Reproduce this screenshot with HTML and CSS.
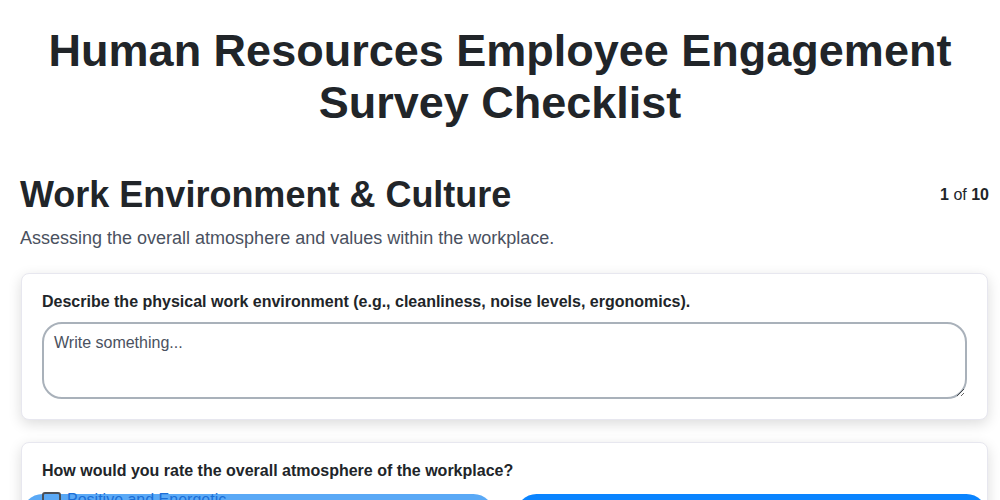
FILE: index.html
```html
<!DOCTYPE html>
<html lang="en">
<head>
<meta charset="utf-8">
<title>Human Resources Employee Engagement Survey Checklist</title>
<link rel="stylesheet" href="styles.css">
</head>
<body>
<main class="page">
  <h1 class="title">Human Resources Employee Engagement Survey Checklist</h1>

  <section class="section">
    <div class="section-head">
      <h2 class="section-title">Work Environment &amp; Culture</h2>
      <div class="counter"><b>1</b> of <b>10</b></div>
    </div>
    <p class="section-desc">Assessing the overall atmosphere and values within the workplace.</p>

    <div class="card">
      <label class="question" for="q1">Describe the physical work environment (e.g., cleanliness, noise levels, ergonomics).</label>
      <textarea id="q1" class="answer" placeholder="Write something..."></textarea>
    </div>

    <div class="card">
      <p class="question">How would you rate the overall atmosphere of the workplace?</p>
      <div class="options">
        <label class="option option-light"><span class="option-row"><input type="checkbox" class="check"><span class="option-text">Positive and Energetic</span></span></label>
        <label class="option option-strong"><span class="option-row"><input type="checkbox" class="check" checked><span class="option-text">Calm and Focused</span></span></label>
        <label class="option option-light"><span class="option-row"><input type="checkbox" class="check"><span class="option-text">Tense or Stressful</span></span></label>
        <label class="option option-light"><span class="option-row"><input type="checkbox" class="check"><span class="option-text">Neutral</span></span></label>
      </div>
    </div>
  </section>
</main>
</body>
</html>
```
FILE: styles.css
```css
html, body {
  margin: 0;
  padding: 0;
  background: #ffffff;
}

body {
  font-family: "Liberation Sans", Arial, sans-serif;
  color: #212529;
}

.page {
  padding: 25px 0 40px;
}

.title {
  margin: 0;
  font-size: 45px;
  line-height: 52px;
  font-weight: 700;
  text-align: center;
  color: #212529;
}

.section {
  margin-top: 45px;
  padding: 0 11px 0 20px;
}

.section-head {
  display: flex;
  align-items: center;
  justify-content: space-between;
}

.section-title {
  margin: 0;
  font-size: 36px;
  font-weight: 700;
  line-height: normal;
  color: #212529;
}

.counter {
  font-size: 16px;
  color: #212529;
}

.section-desc {
  margin: 12px 0 24px;
  font-size: 18px;
  color: #4a5160;
}

.card {
  margin: 0 1px 22px;
  padding: 19px 20px 20px;
  background: #ffffff;
  border: 1px solid #e7e7ef;
  border-radius: 8px;
  box-shadow: 0 4px 14px rgba(0, 0, 0, 0.14);
}

.question {
  display: block;
  margin: 0 0 11px;
  font-size: 16px;
  font-weight: 700;
  line-height: normal;
  color: #212529;
}

.answer {
  display: block;
  box-sizing: border-box;
  width: 100%;
  height: 77px;
  margin: 0;
  padding: 10px;
  border: 2px solid #a9b1ba;
  border-radius: 20px;
  font-family: "Liberation Sans", Arial, sans-serif;
  font-size: 16px;
  color: #212529;
  background: #ffffff;
}

.answer::placeholder {
  color: #4a5160;
}

.options {
  display: grid;
  grid-template-columns: 1fr 1fr;
  column-gap: 22px;
  row-gap: 12px;
  margin: 0 -20px 0 -20px;
}

.option {
  position: relative;
  display: block;
  min-height: 44px;
  cursor: pointer;
}

.option::before {
  content: "";
  position: absolute;
  top: 3px;
  left: 0;
  right: 0;
  bottom: 0;
  border-radius: 22px;
  z-index: 0;
}

.option-light::before {
  background: #5aa9f6;
}

.option-strong::before {
  background: #0a84ff;
}

.option-row {
  position: relative;
  z-index: 1;
  display: flex;
  align-items: flex-start;
  gap: 6px;
  padding: 0 20px;
}

.option-strong .option-row {
  padding-top: 13px;
}

.check {
  appearance: none;
  -webkit-appearance: none;
  box-sizing: border-box;
  width: 19px;
  height: 19px;
  margin: 1px 0 0;
  border: 2px solid #4b5058;
  border-radius: 3px;
  background: transparent;
}

.option-text {
  font-size: 16px;
  line-height: 18px;
  color: #1c6fd6;
}

.option-strong .option-text {
  color: #ffffff;
}

.option-strong .check {
  border-color: #ffffff;
}
```
